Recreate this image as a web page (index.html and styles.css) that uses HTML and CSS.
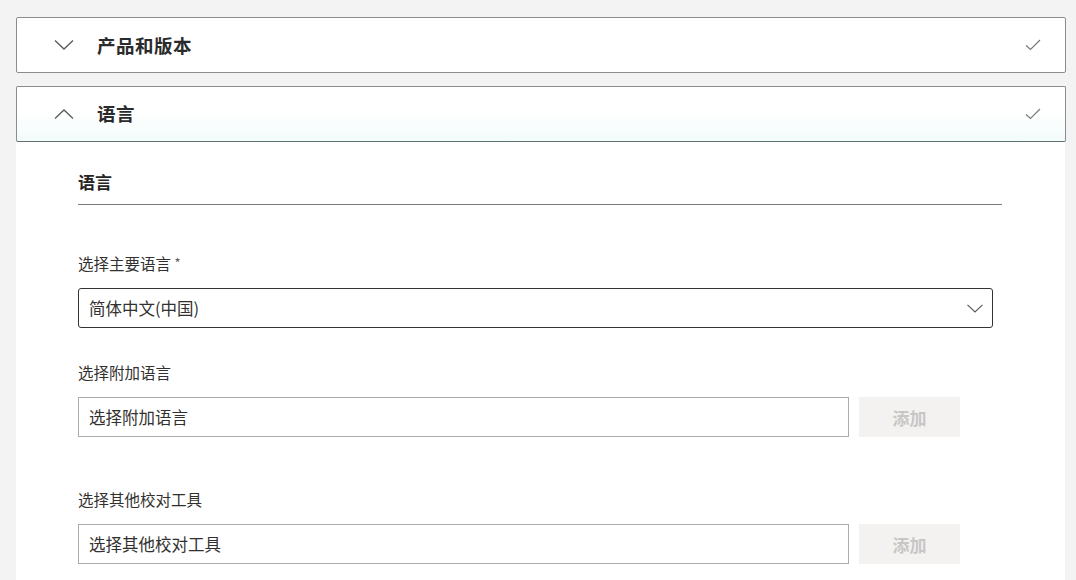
FILE: index.html
```html
<!DOCTYPE html>
<html lang="zh-CN">
<head>
<meta charset="utf-8">
<title>语言</title>
<link rel="stylesheet" href="styles.css">
</head>
<body>
<div class="page">
  <section class="panel">
    <div class="panel-header">
      <svg class="chev" width="20" height="12" viewBox="0 0 20 12"><path d="M1 1.5 L10 10 L19 1.5" fill="none" stroke="#5a5a5a" stroke-width="1.3"/></svg>
      <span class="panel-title">产品和版本</span>
      <svg class="check" width="16" height="12" viewBox="0 0 16 12"><path d="M1 6.5 L5.5 10.5 L15 1" fill="none" stroke="#7a7a7a" stroke-width="1.2"/></svg>
    </div>
  </section>

  <section class="panel open">
    <div class="panel-header">
      <svg class="chev" width="20" height="12" viewBox="0 0 20 12"><path d="M1 10.5 L10 2 L19 10.5" fill="none" stroke="#5a5a5a" stroke-width="1.3"/></svg>
      <span class="panel-title">语言</span>
      <svg class="check" width="16" height="12" viewBox="0 0 16 12"><path d="M1 6.5 L5.5 10.5 L15 1" fill="none" stroke="#7a7a7a" stroke-width="1.2"/></svg>
    </div>
    <div class="panel-body">
      <h2 class="section-title">语言</h2>

      <div class="field first">
        <div class="label">选择主要语言 <span class="req">*</span></div>
        <div class="select">
          <span>简体中文(中国)</span>
          <svg width="16" height="9" viewBox="0 0 16 9"><path d="M0.5 0.8 L8 8 L15.5 0.8" fill="none" stroke="#555" stroke-width="1.1"/></svg>
        </div>
      </div>

      <div class="field second">
        <div class="label">选择附加语言</div>
        <div class="row">
          <div class="input">选择附加语言</div>
          <button class="add" disabled>添加</button>
        </div>
      </div>

      <div class="field third">
        <div class="label">选择其他校对工具</div>
        <div class="row">
          <div class="input">选择其他校对工具</div>
          <button class="add" disabled>添加</button>
        </div>
      </div>
    </div>
  </section>
</div>
</body>
</html>
```

FILE: styles.css
```css
html, body {
  margin: 0;
  padding: 0;
  background: #f3f3f3;
  font-family: "Noto Sans CJK SC", "Noto Sans", sans-serif;
  color: #323130;
}

.page {
  padding: 17px 0 0 16px;
  width: 1050px;
}

.panel + .panel {
  margin-top: 13px;
}

.panel-header {
  height: 54px;
  border: 1px solid #8c8c8c;
  border-radius: 2px;
  background: #fff;
  display: flex;
  align-items: center;
  padding: 0 24px 0 37px;
}

.open .panel-header {
  background: linear-gradient(#ffffff 45%, #f3fbfb);
  border-color: #8c8c8c #8c8c8c #5f7373 #8c8c8c;
}

.chev {
  flex: none;
  margin-right: 23px;
}

.panel-title {
  flex: 1;
  font-size: 18.5px;
  font-weight: 700;
  color: #2b2b2b;
  line-height: 22px;
  letter-spacing: 0.5px;
}

.open .panel-title {
  margin-top: -2px;
}

.check {
  flex: none;
}

.panel-body {
  background: #fff;
  margin: 0 1px 0 0;
  padding: 28px 0 40px 62px;
}

.section-title {
  margin: 0;
  width: 924px;
  font-size: 17px;
  font-weight: 700;
  line-height: 24px;
  color: #252423;
  padding-bottom: 10px;
  border-bottom: 1px solid #777;
}

.field .label {
  font-size: 15.5px;
  line-height: 22px;
  margin-bottom: 14px;
  color: #323130;
}

.req {
  color: #605e5c;
  font-size: 13px;
  vertical-align: 2px;
}

.field.first { margin-top: 47px; }
.field.second { margin-top: 33px; }
.field.third { margin-top: 51px; }

.select {
  width: 913px;
  height: 38px;
  box-sizing: content-box;
  border: 1px solid #333;
  border-radius: 3px;
  display: flex;
  align-items: center;
  justify-content: space-between;
  padding: 0;
}

.select span {
  padding-left: 10px;
  font-size: 16.5px;
  color: #323130;
}

.select svg {
  margin-right: 9px;
}

.row {
  display: flex;
  gap: 10px;
}

.input {
  width: 759px;
  height: 38px;
  border: 1px solid #ababab;
  padding-left: 10px;
  font-size: 16.5px;
  line-height: 38px;
  color: #323130;
}

.add {
  width: 101px;
  height: 40px;
  border: none;
  background: #f3f2f1;
  color: #c8c6c4;
  font-family: "Noto Sans CJK SC", sans-serif;
  font-size: 17px;
  font-weight: 700;
  padding: 0;
}
```
